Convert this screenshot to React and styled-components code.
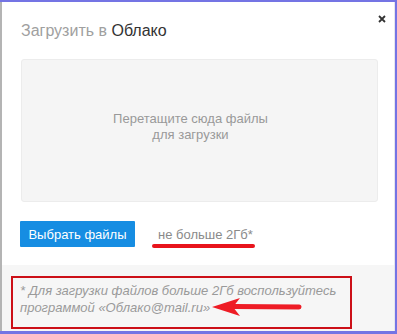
import styled, { createGlobalStyle } from "styled-components";

const GlobalStyle = createGlobalStyle`
  html, body {
    margin: 0;
    padding: 0;
  }
  body {
    font-family: "Liberation Sans", Arial, sans-serif;
  }
`;

const UploadDialog = () => {
  return (
    <StyledFrame>
      <GlobalStyle />
      <StyledModal>
        <StyledClose aria-label="Закрыть">
          <svg width="8" height="8" viewBox="0 0 8 8">
            <path d="M1 1 L7 7 M7 1 L1 7" stroke="#333" strokeWidth="1.8" />
          </svg>
        </StyledClose>

        <StyledTitle>
          Загрузить в <span>Облако</span>
        </StyledTitle>

        <StyledDropzone>
          Перетащите сюда файлы
          <br />
          для загрузки
        </StyledDropzone>

        <StyledActions>
          <StyledButton>Выбрать файлы</StyledButton>
          <StyledLimit>не больше 2Гб*</StyledLimit>
        </StyledActions>

        <StyledFooter>
          <StyledHighlight>
            * Для загрузки файлов больше 2Гб воспользуйтесь
            <br />
            программой «Облако@mail.ru»
            <StyledArrow width="90" height="20" viewBox="0 0 90 20">
              <path d="M87 10 L22 9.5" stroke="#ee1c25" strokeWidth="5" strokeLinecap="round" />
              <path d="M0 10 L28 1 L21 10 L28 19 Z" fill="#ee1c25" />
            </StyledArrow>
          </StyledHighlight>
        </StyledFooter>
      </StyledModal>
    </StyledFrame>
  );
};

// Styles
const StyledFrame = styled.div`
  width: 397px;
  height: 334px;
  box-sizing: border-box;
  padding: 2px 2px 3px 0;
  background: #7474e4;
`;

const StyledModal = styled.div`
  position: relative;
  height: 100%;
  box-sizing: border-box;
  display: flex;
  flex-direction: column;
  background: #fff;
  border-left: 2px solid #b4b4b4;
  border-right: 1px solid #e6e6ee;
`;

const StyledClose = styled.button`
  position: absolute;
  top: 11px;
  right: 6px;
  width: 12px;
  height: 12px;
  padding: 0;
  border: 0;
  background: none;
  display: flex;
  align-items: center;
  justify-content: center;
`;

const StyledTitle = styled.h1`
  margin: 0;
  padding: 19px 0 0 19px;
  font-size: 16px;
  line-height: 20px;
  font-weight: normal;
  color: #a0a0a0;

  span {
    color: #333;
  }
`;

const StyledDropzone = styled.div`
  margin: 18px 16px 0 19px;
  height: 143px;
  box-sizing: border-box;
  display: flex;
  align-items: center;
  justify-content: center;
  padding: 0 18px 8px 0;
  background: #f5f5f5;
  border: 1px solid #ececec;
  border-radius: 3px;
  text-align: center;
  font-size: 13px;
  line-height: 16px;
  color: #999;
`;

const StyledActions = styled.div`
  display: flex;
  align-items: center;
  gap: 23px;
  margin: 19px 0 0 18px;
`;

const StyledButton = styled.button`
  width: 115px;
  height: 26px;
  padding: 0;
  border: 0;
  border-radius: 1px;
  background: #168de2;
  color: #fff;
  font-family: inherit;
  font-size: 13px;
`;

const StyledLimit = styled.span`
  position: relative;
  font-size: 13px;
  color: #8a8a8a;

  &::after {
    content: "";
    position: absolute;
    left: -6px;
    right: -2px;
    bottom: -6px;
    height: 4px;
    border-radius: 2px;
    background: #e8141c;
  }
`;

const StyledFooter = styled.div`
  flex: 1;
  margin-top: 18px;
  padding: 11px 0 0 9px;
  background: #f6f6f6;
`;

const StyledHighlight = styled.div`
  position: relative;
  width: 341px;
  height: 53px;
  box-sizing: border-box;
  padding: 4px 0 0 7px;
  border: 2px solid #cc1018;
  font-size: 13px;
  line-height: 17px;
  font-style: italic;
  color: #9a9a9a;
`;

const StyledArrow = styled.svg`
  position: absolute;
  left: 199px;
  top: 19px;
`;

export default UploadDialog;
